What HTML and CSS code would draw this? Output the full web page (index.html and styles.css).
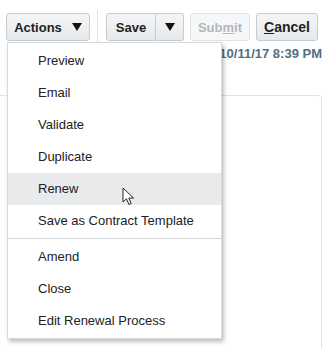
FILE: index.html
```html
<!DOCTYPE html>
<html lang="en">
<head>
  <meta charset="UTF-8">
  <title>Contract Actions</title>
  <link rel="stylesheet" href="styles.css">
</head>
<body>
  <!-- Toolbar -->
  <div class="toolbar">
    <button class="btn btn-actions">Actions
      <svg class="caret" width="10" height="8" viewBox="0 0 10 8"><path d="M0 0 H10 L5 8 Z" fill="#111"/></svg>
    </button>
    <div class="sep"></div>
    <div class="split">
      <button class="btn split-main">Save</button>
      <button class="btn split-arrow">
        <svg width="10" height="8" viewBox="0 0 10 8"><path d="M0 0 H10 L5 8 Z" fill="#111"/></svg>
      </button>
    </div>
    <button class="btn btn-disabled">Sub<u>m</u>it</button>
    <button class="btn btn-cancel"><u>C</u>ancel</button>
  </div>

  <div class="date-row">10/11/17 8:39 PM</div>

  <div class="panel"></div>

  <!-- Actions menu -->
  <div class="menu">
    <div class="menu-item">Preview</div>
    <div class="menu-item">Email</div>
    <div class="menu-item">Validate</div>
    <div class="menu-item">Duplicate</div>
    <div class="menu-item hover">Renew</div>
    <div class="menu-item">Save as Contract Template</div>
    <div class="menu-sep"></div>
    <div class="menu-item">Amend</div>
    <div class="menu-item">Close</div>
    <div class="menu-item">Edit Renewal Process</div>
  </div>

  <svg class="cursor" width="13" height="20" viewBox="0 0 13 20">
    <path d="M1 1 L1 15 L4.5 11.8 L7 17.5 L9.2 16.5 L6.8 11 L11.5 11 Z" fill="#fff" stroke="#222" stroke-width="1" stroke-linejoin="round"/>
  </svg>
</body>
</html>
```

FILE: styles.css
```css
* {
  margin: 0;
  padding: 0;
  box-sizing: border-box;
}

body {
  font-family: "Liberation Sans", Arial, sans-serif;
  font-size: 13px;
  color: #222;
  background: #fff;
  width: 328px;
  height: 348px;
  overflow: hidden;
  position: relative;
}

.toolbar {
  display: flex;
  align-items: center;
  padding: 13px 0 0 6px;
  height: 41px;
}

.btn {
  font-family: inherit;
  font-size: 13px;
  font-weight: bold;
  color: #222;
  height: 28px;
  border: 1px solid #c5cdd4;
  border-radius: 3px;
  background: linear-gradient(#f4f5f6, #e6e9eb);
  display: flex;
  align-items: center;
  justify-content: center;
}

.btn u {
  text-decoration: underline;
}

.caret {
  margin-left: 10px;
}

.btn-actions {
  width: 84px;
}

.sep {
  width: 1px;
  height: 34px;
  background: #dde1e4;
  margin: 0 8px 0 7px;
}

.split {
  display: flex;
}

.split-main {
  width: 50px;
  border-radius: 3px 0 0 3px;
}

.split-arrow {
  width: 28px;
  border-left: none;
  border-radius: 0 3px 3px 0;
}

.btn-disabled {
  width: 60px;
  margin-left: 6px;
  color: #b3b8bd;
  background: #f6f7f8;
  border-color: #dfe3e6;
}

.btn-cancel {
  width: 62px;
  margin-left: 6px;
  font-size: 14px;
}

.date-row {
  text-align: right;
  padding-right: 6px;
  margin-top: 5px;
  font-weight: bold;
  font-size: 13px;
  color: #546e80;
}

.panel {
  margin-top: 34px;
  margin-right: 6px;
  height: 260px;
  border-top: 1px solid #dfe2e5;
  border-right: 1px solid #dfe2e5;
  border-radius: 0 4px 0 0;
}

.menu {
  position: absolute;
  left: 7px;
  top: 42px;
  width: 215px;
  background: #fff;
  border: 1px solid #d6d9dc;
  box-shadow: 2px 3px 4px rgba(0, 0, 0, 0.25);
  padding: 2px 0 1px;
}

.menu-item {
  height: 32px;
  line-height: 32px;
  padding-left: 30px;
  color: #222;
  white-space: nowrap;
}

.menu-item.hover {
  background: #e9eaeb;
}

.menu-sep {
  height: 1px;
  margin: 1px 0 2px;
  background: #d3d6d9;
}

.cursor {
  position: absolute;
  left: 122px;
  top: 187px;
}
```
